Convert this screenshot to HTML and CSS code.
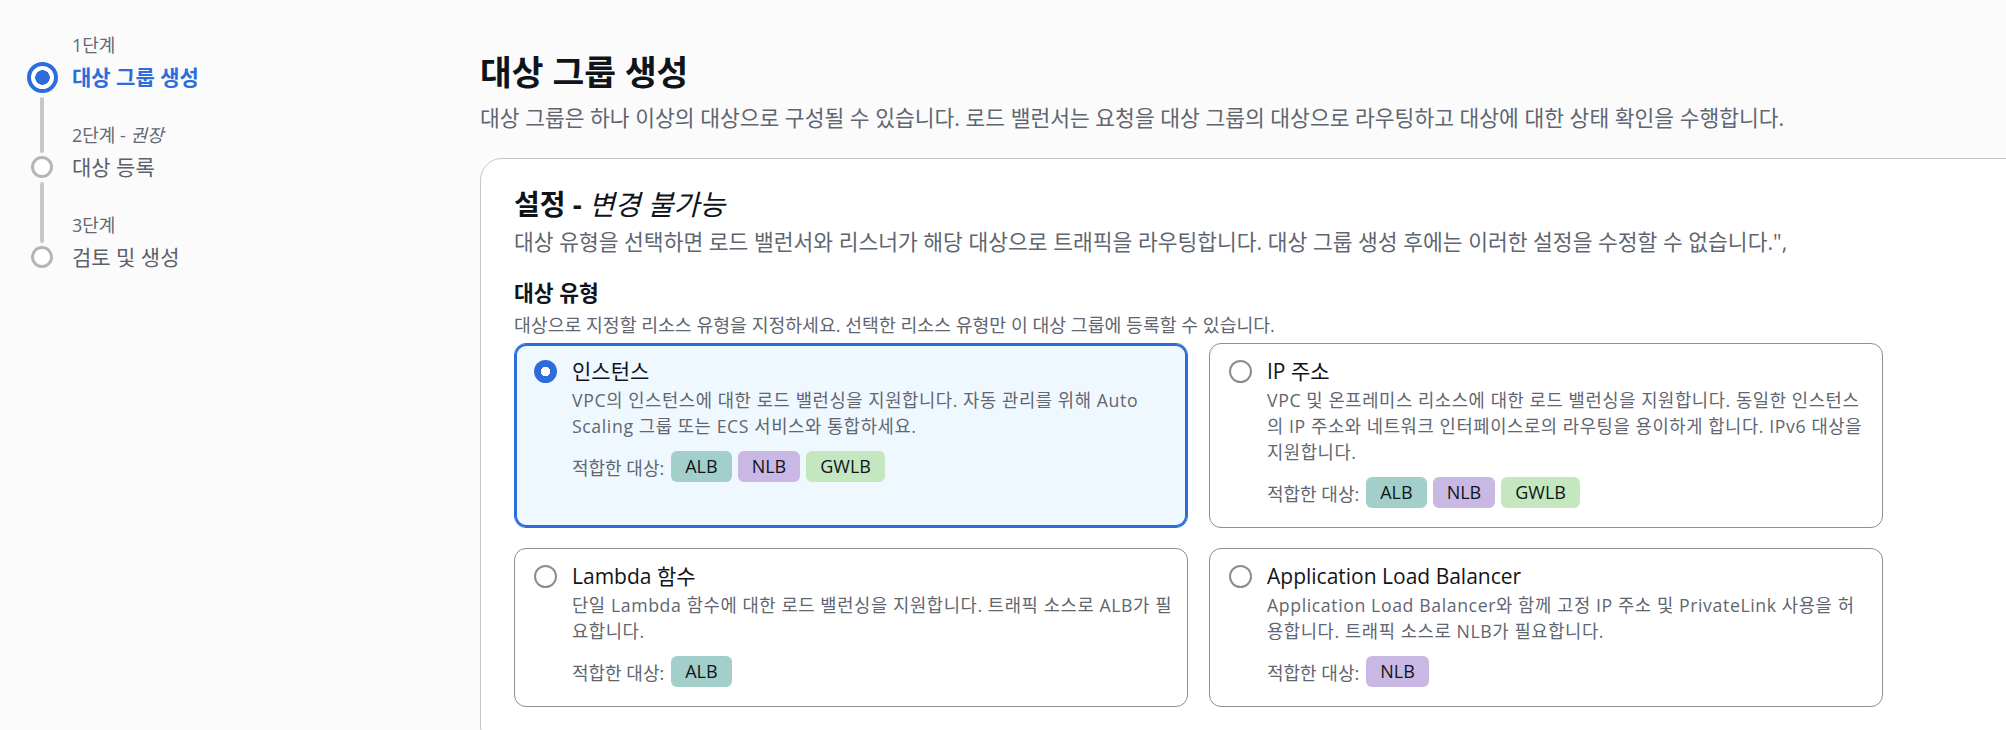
FILE: index.html
```html
<!DOCTYPE html>
<html lang="ko">
<head>
  <meta charset="UTF-8">
  <title>대상 그룹 생성</title>
  <link rel="stylesheet" href="styles.css">
</head>
<body>
  <div class="layout">
    <nav class="wizard-nav">
      <ol class="steps">
        <li class="step step-active">
          <span class="step-num">1단계</span>
          <span class="step-marker"></span>
          <span class="step-title">대상 그룹 생성</span>
        </li>
        <li class="step">
          <span class="step-num">2단계 - <i>권장</i></span>
          <span class="step-marker"></span>
          <span class="step-title">대상 등록</span>
        </li>
        <li class="step">
          <span class="step-num">3단계</span>
          <span class="step-marker"></span>
          <span class="step-title">검토 및 생성</span>
        </li>
      </ol>
    </nav>

    <main class="content">
      <h1>대상 그룹 생성</h1>
      <p class="page-desc">대상 그룹은 하나 이상의 대상으로 구성될 수 있습니다. 로드 밸런서는 요청을 대상 그룹의 대상으로 라우팅하고 대상에 대한 상태 확인을 수행합니다.</p>

      <section class="panel">
        <h2>설정 - <i>변경 불가능</i></h2>
        <p class="panel-desc">대상 유형을 선택하면 로드 밸런서와 리스너가 해당 대상으로 트래픽을 라우팅합니다. 대상 그룹 생성 후에는 이러한 설정을 수정할 수 없습니다.",</p>

        <div class="field">
          <div class="field-label">대상 유형</div>
          <div class="field-hint">대상으로 지정할 리소스 유형을 지정하세요. 선택한 리소스 유형만 이 대상 그룹에 등록할 수 있습니다.</div>

          <div class="tiles">
            <div class="tile tile-selected">
              <span class="radio"></span>
              <div class="tile-body">
                <div class="tile-title">인스턴스</div>
                <div class="tile-desc">VPC의 인스턴스에 대한 로드 밸런싱을 지원합니다. 자동 관리를 위해 Auto Scaling 그룹 또는 ECS 서비스와 통합하세요.</div>
                <div class="fit">
                  <span class="fit-label">적합한 대상:</span>
                  <span class="badge alb">ALB</span>
                  <span class="badge nlb">NLB</span>
                  <span class="badge gwlb">GWLB</span>
                </div>
              </div>
            </div>

            <div class="tile">
              <span class="radio"></span>
              <div class="tile-body">
                <div class="tile-title">IP 주소</div>
                <div class="tile-desc">VPC 및 온프레미스 리소스에 대한 로드 밸런싱을 지원합니다. 동일한 인스턴스의 IP 주소와 네트워크 인터페이스로의 라우팅을 용이하게 합니다. IPv6 대상을 지원합니다.</div>
                <div class="fit">
                  <span class="fit-label">적합한 대상:</span>
                  <span class="badge alb">ALB</span>
                  <span class="badge nlb">NLB</span>
                  <span class="badge gwlb">GWLB</span>
                </div>
              </div>
            </div>

            <div class="tile">
              <span class="radio"></span>
              <div class="tile-body">
                <div class="tile-title">Lambda 함수</div>
                <div class="tile-desc">단일 Lambda 함수에 대한 로드 밸런싱을 지원합니다. 트래픽 소스로 ALB가 필요합니다.</div>
                <div class="fit">
                  <span class="fit-label">적합한 대상:</span>
                  <span class="badge alb">ALB</span>
                </div>
              </div>
            </div>

            <div class="tile">
              <span class="radio"></span>
              <div class="tile-body">
                <div class="tile-title">Application Load Balancer</div>
                <div class="tile-desc">Application Load Balancer와 함께 고정 IP 주소 및 PrivateLink 사용을 허용합니다. 트래픽 소스로 NLB가 필요합니다.</div>
                <div class="fit">
                  <span class="fit-label">적합한 대상:</span>
                  <span class="badge nlb">NLB</span>
                </div>
              </div>
            </div>
          </div>
        </div>
      </section>
    </main>
  </div>
</body>
</html>
```

FILE: styles.css
```css
html, body {
  overflow: hidden;
}
body {
  margin: 0;
  background: #fbfbfc;
  color: #0f141a;
  font-family: "Open Sans", "Noto Sans CJK KR", sans-serif;
}
i {
  font-style: italic;
}

.layout {
  display: flex;
  align-items: flex-start;
}

/* 왼쪽 단계 표시 */
.wizard-nav {
  flex: none;
  width: 453px;
  padding: 34px 0 0 27px;
}
.steps {
  list-style: none;
  margin: 0;
  padding: 0;
}
.step {
  position: relative;
  display: grid;
  grid-template-columns: 30px 1fr;
  grid-template-rows: 23px 28px;
  column-gap: 15px;
  row-gap: 6px;
  margin-bottom: 33px;
}
.step-num {
  grid-column: 2;
  grid-row: 1;
  font-size: 18px;
  line-height: 23px;
  color: #656871;
}
.step-title {
  grid-column: 2;
  grid-row: 2;
  font-size: 21px;
  line-height: 28px;
  color: #5b616b;
}
.step-marker {
  grid-column: 1;
  grid-row: 2;
  align-self: center;
  justify-self: center;
  box-sizing: border-box;
  width: 22px;
  height: 22px;
  border: 3px solid #b4b4bb;
  border-radius: 50%;
  background: #fff;
}
.step-active .step-title {
  color: #2c6ddb;
  font-weight: 700;
}
.step-active .step-marker {
  width: 31px;
  height: 31px;
  border: 4px solid #2c6ddb;
  background: radial-gradient(circle, #2c6ddb 0 7px, #fff 7.5px);
}
/* 단계 사이 연결선 */
.step:not(:last-child)::after {
  content: "";
  position: absolute;
  left: 13px;
  top: 58px;
  width: 4px;
  height: 61px;
  border-radius: 2px;
  background: #c6c6cd;
}
.step-active:not(:last-child)::after {
  top: 63px;
  height: 56px;
}

/* 본문 */
.content {
  flex: none;
  width: 1600px;
  padding-top: 52px;
}
h1 {
  margin: 0;
  font-size: 34.5px;
  line-height: 40px;
  font-weight: 700;
}
.page-desc {
  margin: 12px 0 0;
  font-size: 21.5px;
  line-height: 28px;
  color: #5f6670;
}

.panel {
  margin-top: 26px;
  padding: 28px 33px 40px;
  background: #fff;
  border: 1px solid #c6c6cd;
  border-radius: 22px;
}
.panel h2 {
  margin: 0;
  font-size: 28px;
  line-height: 34px;
  font-weight: 700;
}
.panel h2 i {
  font-weight: 400;
}
.panel-desc {
  margin: 7px 0 0;
  font-size: 21.5px;
  line-height: 28px;
  color: #5f6670;
}

.field {
  margin-top: 23px;
}
.field-label {
  font-size: 21.5px;
  line-height: 28px;
  font-weight: 700;
}
.field-hint {
  margin-top: 6px;
  font-size: 18.3px;
  line-height: 23px;
  color: #5f6670;
}

/* 대상 유형 타일 */
.tiles {
  display: grid;
  grid-template-columns: 674px 674px;
  column-gap: 21px;
  row-gap: 20px;
  margin-top: 7px;
}
.tile {
  display: grid;
  grid-template-columns: 23px 1fr;
  column-gap: 15px;
  align-items: start;
  padding: 13px 13px 19px 19px;
  background: #fff;
  border: 1px solid #8c8c94;
  border-radius: 12px;
}
.tile-selected {
  border-color: #2c6ddb;
  box-shadow: inset 0 0 0 2px #2c6ddb;
  background: #f0f8ff;
}
.radio {
  box-sizing: border-box;
  width: 23px;
  height: 23px;
  margin-top: 3px;
  border: 2px solid #8c8c94;
  border-radius: 50%;
  background: #fff;
}
.tile-selected .radio {
  border: none;
  background: radial-gradient(circle, #fff 0 4.5px, #2c6ddb 5px);
}
.tile-title {
  font-size: 21px;
  line-height: 29px;
}
.tile-desc {
  margin-top: 1px;
  font-size: 17.7px;
  line-height: 26px;
  letter-spacing: 0.6px;
  color: #5f6670;
}
.fit {
  display: flex;
  align-items: center;
  gap: 6px;
  margin-top: 12px;
  font-size: 18px;
}
.fit-label {
  margin-right: 1px;
  color: #5f6670;
}
.badge {
  height: 31px;
  padding: 0 14px;
  line-height: 31px;
  border-radius: 6px;
  color: #0f141a;
}
.alb {
  background: #a3cfca;
}
.nlb {
  background: #c9b8e3;
}
.gwlb {
  background: #c5e7bf;
}
```
